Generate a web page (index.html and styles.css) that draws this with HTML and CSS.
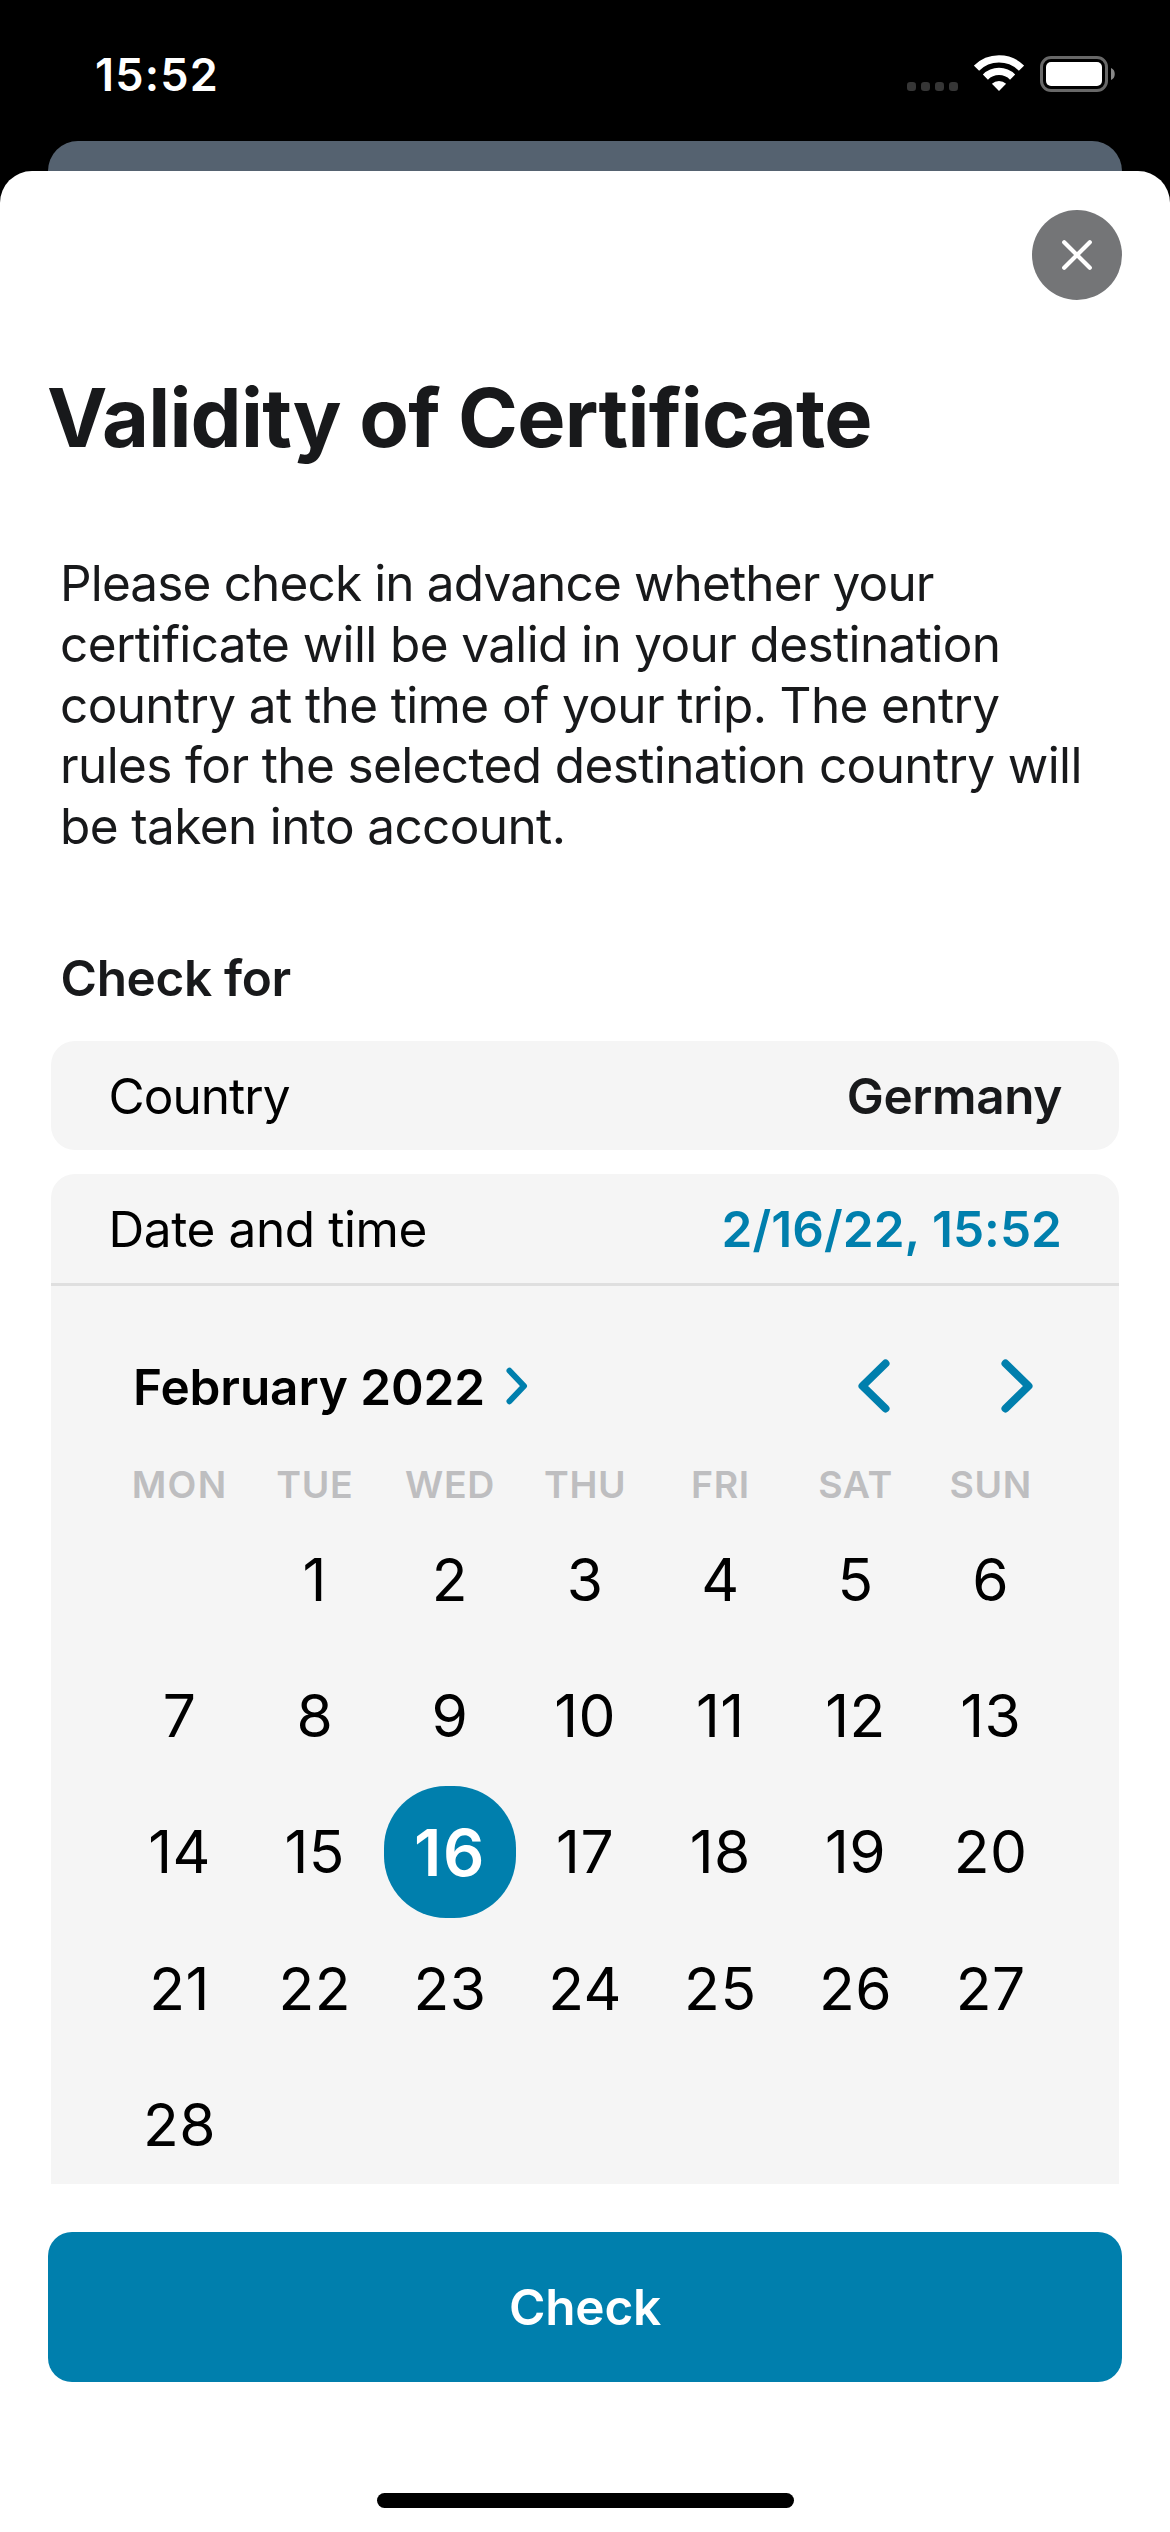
FILE: index.html
```html
<!DOCTYPE html>
<html lang="en">
<head>
<meta charset="utf-8">
<title>Validity of Certificate</title>
<link rel="stylesheet" href="styles.css">
</head>
<body>
<div class="screen">
  <header class="status">
    <span class="time">15:52</span>
    <div class="status-icons">
      <svg class="cell" width="52" height="38" viewBox="0 0 52 38" fill="#363636">
        <rect x="0" y="27" width="9" height="9" rx="3.2"/><rect x="14" y="27" width="9" height="9" rx="3.2"/><rect x="28" y="27" width="9" height="9" rx="3.2"/><rect x="42" y="27" width="9" height="9" rx="3.2"/>
      </svg>
      <svg class="wifi" width="50" height="38" viewBox="0 0 50 38" fill="none" stroke="#fff">
        <path d="M2.5 13.2A31.8 31.8 0 0 1 47.5 13.2" stroke-width="7.4"/>
        <path d="M11.4 22.1A19.2 19.2 0 0 1 38.6 22.1" stroke-width="7.2"/>
        <path d="M25 35.9 17.9 28.8A10.1 10.1 0 0 1 32.1 28.8Z" fill="#fff" stroke="none"/>
      </svg>
      <svg class="battery" width="76" height="38" viewBox="0 0 76 38">
        <rect x="1.5" y="2.5" width="65" height="33" rx="9.5" fill="none" stroke="#686868" stroke-width="3"/>
        <rect x="6" y="7" width="56" height="24" rx="5" fill="#fff"/>
        <path d="M71 13C76 14.5 76 23.500 71 25Z" fill="#888"/>
      </svg>
    </div>
  </header>
  <div class="backdrop"></div>
  <main class="sheet">
    <button class="close" aria-label="Close">
      <svg width="90" height="90" viewBox="0 0 90 90" fill="none" stroke="#fff" stroke-width="4.200" stroke-linecap="round"><path d="M32.200 32.200 57.800 57.800M57.800 32.200 32.200 57.800"/></svg>
    </button>
    <h1 class="title">Validity of Certificate</h1>
    <p class="intro"><span class="l1">Please check in advance whether your</span><br>certificate will be valid in your destination<br>country at the time of your trip. The entry<br>rules for the selected destination country will<br>be taken into account.</p>
    <h2 class="subtitle">Check for</h2>
    <div class="card row country"><span class="label">Country</span><span class="value">Germany</span></div>
    <section class="card date">
      <div class="row"><span class="label when">Date and time</span><span class="value accent">2/16/22, 15:52</span></div>
      <div class="cal-head">
        <span class="month">February 2022</span>
        <svg class="more" width="22" height="38" viewBox="0 0 22 38"><path d="M3.500 3.700 18 19 3.500 34.300"/></svg>
        <svg class="prev" width="32" height="54" viewBox="0 0 32 54"><path d="M27.500 4.500 4.500 27 27.500 49.500"/></svg>
        <svg class="next" width="32" height="54" viewBox="0 0 32 54"><path d="M4.500 4.500 27.500 27 4.500 49.500"/></svg>
      </div>
      <div class="week"><span>MON</span><span>TUE</span><span>WED</span><span>THU</span><span>FRI</span><span>SAT</span><span>SUN</span></div>
      <div class="days">
        <span></span><span>1</span><span>2</span><span>3</span><span>4</span><span>5</span><span>6</span>
        <span>7</span><span>8</span><span>9</span><span>10</span><span>11</span><span>12</span><span>13</span>
        <span>14</span><span>15</span><span class="today">16</span><span>17</span><span>18</span><span>19</span><span>20</span>
        <span>21</span><span>22</span><span>23</span><span>24</span><span>25</span><span>26</span><span>27</span>
        <span>28</span>
      </div>
    </section>
    <button class="check">Check</button>
    <div class="home"></div>
  </main>
</div>
</body>
</html>
```
FILE: styles.css
```css
* { box-sizing: border-box; }
body { margin: 0; background: #000; font-family: Inter, "Liberation Sans", sans-serif; color: #18191b; }
button { border: 0; padding: 0; font: inherit; }
svg { display: block; flex: none; }
.screen { display: flex; flex-direction: column; width: 1170px; height: 2532px; overflow: hidden; }

.status { display: flex; justify-content: space-between; align-items: center; flex: none; height: 141px; padding: 7px 54px 0 95px; color: #fff; }
.time { margin-top: 1px; font-size: 45px; line-height: 54px; font-weight: 600; letter-spacing: 1.2px; }
.status-icons { display: flex; align-items: center; }
.wifi { margin-left: 15px; }
.battery { margin-left: 16px; }

/* The page underneath shows as a strip behind the sheet */
.backdrop { flex: none; height: 64px; margin: 0 48px -34px; border-radius: 30px 30px 0 0; background: #556270; }
.sheet { position: relative; display: flex; flex-direction: column; flex: 1; padding: 39px 48px 24px; border-radius: 32px 32px 0 0; background: #fff; }
.close { align-self: flex-end; width: 90px; height: 90px; border-radius: 50%; background: #747577; }
.title { margin: 69px 0 0 -1px; font-size: 81px; line-height: 98px; font-weight: 700; letter-spacing: -.75px; }
.intro { margin: 86px 0 0 12px; font-size: 49.5px; line-height: 60.75px; letter-spacing: -.62px; white-space: nowrap; }
.l1 { letter-spacing: -.86px; }
.subtitle { margin: 91px 0 0 12.500px; font-size: 49.5px; line-height: 60px; font-weight: 600; letter-spacing: -.34px; }

.card { flex: none; margin: 0 3px; background: #f5f5f5; }
.row { display: flex; justify-content: space-between; align-items: center; height: 109px; padding: 1px 57px 0 57.500px; font-size: 49.5px; line-height: 60px; color: #000; }
.country { margin-top: 33px; border-radius: 24px; }
.label { letter-spacing: -.95px; }
.when { letter-spacing: -.4px; }
.value { font-weight: 600; color: #18191b; letter-spacing: -.4px; }
.accent { color: #007fad; letter-spacing: .05px; }

.date { height: 1010px; margin-top: 24px; border-radius: 24px 24px 0 0; overflow: hidden; }
.cal-head { display: flex; align-items: center; height: 179px; padding: 24px 86px 0 82px; border-top: 3px solid #dfdfdf; color: #000; }
.cal-head svg { fill: none; stroke: #007fad; stroke-linecap: round; stroke-linejoin: round; stroke-width: 8px; }
.month { margin-top: 2px; font-size: 49.5px; line-height: 60px; font-weight: 600; letter-spacing: -.1px; }
.cal-head .more { margin-left: 21px; stroke-width: 6px; }
.prev { margin-left: auto; }
.next { margin-left: 111px; }
.week, .days { display: grid; grid-template-columns: repeat(7, 135.200px); margin-left: 61px; text-align: center; }
.week { height: 49px; font-size: 37.5px; line-height: 46px; font-weight: 600; letter-spacing: .6px; color: #bebec0; }
.week span:first-child { letter-spacing: 1.3px; }
.days { grid-auto-rows: 136.300px; place-items: center; padding-top: 1px; font-size: 58.7px; line-height: 72px; color: #000; letter-spacing: .5px; }
.today { width: 132px; height: 132px; border-radius: 62px; background: #007fad; color: #fff; font-size: 64.7px; line-height: 133px; font-weight: 600; letter-spacing: 1.500px; }

.check { flex: none; height: 150px; margin-top: 48px; border-radius: 24px; background: #007fad; color: #fff; font-size: 49.5px; line-height: 150px; font-weight: 600; letter-spacing: -.2px; }
.home { width: 417px; height: 15px; margin: auto auto 0; border-radius: 8px; background: #000; }
```
